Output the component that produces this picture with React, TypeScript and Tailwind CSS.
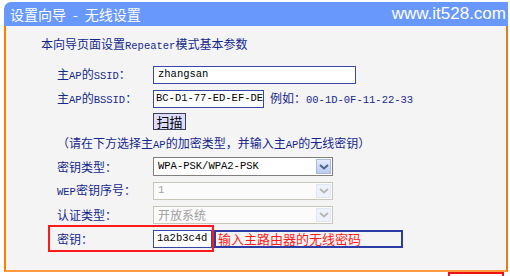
import type { ReactNode } from "react";

const cjk = "font-['Noto_Sans_CJK_SC',sans-serif]";
const mono = "font-['Liberation_Mono','Noto_Sans_CJK_SC',monospace] text-[10.5px]";

function M({ children }: { children: ReactNode }) {
  return <span className={mono}>{children}</span>;
}

function Label({ children }: { children: ReactNode }) {
  return (
    <div className="w-[96px] shrink-0 text-[12px] leading-[16px] text-[#14288c]">
      {children}
    </div>
  );
}

function Chevron({ disabled }: { disabled?: boolean }) {
  return (
    <svg width="10" height="6" viewBox="0 0 10 6">
      <path
        d="M1 1l4 3.5L9 1"
        fill="none"
        stroke={disabled ? "#b8b8b8" : "#4d6185"}
        strokeWidth="2"
      />
    </svg>
  );
}

function Select({ value, disabled }: { value: string; disabled?: boolean }) {
  return (
    <div
      className={`flex h-full w-[180px] items-stretch border ${
        disabled ? "border-[#c9c7ba] bg-[#fbfbfb]" : "border-[#7f7f7f] bg-white"
      }`}
    >
      <div
        className={`flex flex-1 items-center pl-[4px] ${
          disabled ? "text-[#a0a0a0]" : "text-black"
        } ${value === "开放系统" ? "text-[12px]" : mono}`}
      >
        {value}
      </div>
      <div
        className={`m-[1px] flex w-[15px] items-center justify-center border ${
          disabled
            ? "border-[#e2e6ee] bg-[#eef2fb]"
            : "border-[#a9b9d8] bg-gradient-to-b from-[#e4ecfc] to-[#b9cbf1]"
        }`}
      >
        <Chevron disabled={disabled} />
      </div>
    </div>
  );
}

export default function App() {
  return (
    <div className={`h-[276px] w-[510px] overflow-hidden bg-white pt-[2px] ${cjk}`}>
      <div className="ml-[4px] w-[504px]">
        <div className="flex h-[24px] items-center justify-between rounded-tl-[7px] bg-[#6898fc] pl-[6px] pr-[2px] text-white">
          <span className="text-[14px] leading-[24px]">
            设置向导<span className="mx-[7px]">-</span>无线设置
          </span>
          <span className="font-['Liberation_Sans',sans-serif] text-[17px] leading-[24px]">
            www.it528.com
          </span>
        </div>
        <div className="flex h-[246px] flex-col border-x-2 border-b-2 border-l-[#ff7d00] border-r-[#e87a1e] border-b-[#ff9a3c] bg-[#f4f4f4] pt-[10px] text-[12px]">
          <div className="h-[16px] pl-[35px] leading-[16px] text-[#14288c]">
            本向导页面设置<M>Repeater</M>模式基本参数
          </div>

          <div className="mt-[14px] flex h-[18px] items-center pl-[51px]">
            <Label>
              主<M>AP</M>的<M>SSID</M>：
            </Label>
            <div className={`flex h-full w-[203px] items-center border-[1.5px] border-[#3648a8] bg-white pl-[4px] ${mono}`}>
              zhangsan
            </div>
          </div>

          <div className="mt-[6px] flex h-[18px] items-center pl-[51px]">
            <Label>
              主<M>AP</M>的<M>BSSID</M>：
            </Label>
            <div className={`flex h-full w-[111px] items-center whitespace-nowrap border-[1.5px] border-[#3648a8] bg-white pl-[2px] ${mono}`}>
              BC-D1-77-ED-EF-DE
            </div>
            <span className="ml-[6px] text-[#14288c]">
              例如：<M>00-1D-0F-11-22-33</M>
            </span>
          </div>

          <div className="mt-[5px] flex h-[17px] pl-[147px]">
            <div className="flex w-[33px] items-center justify-center border border-[#3d3d5c] bg-[#dcdcfc] text-[13px] leading-[15px] text-black">
              扫描
            </div>
          </div>

          <div className="mt-[5px] h-[16px] pl-[51px] leading-[16px] text-[#14288c]">
            （请在下方选择主<M>AP</M>的加密类型，并输入主<M>AP</M>的无线密钥）
          </div>

          <div className="mt-[6px] flex h-[19px] items-center pl-[51px]">
            <Label>密钥类型：</Label>
            <Select value="WPA-PSK/WPA2-PSK" />
          </div>

          <div className="mt-[6px] flex h-[18px] items-center pl-[51px]">
            <Label>
              <M>WEP</M>密钥序号：
            </Label>
            <Select value="1" disabled />
          </div>

          <div className="mt-[6px] flex h-[18px] items-center pl-[51px]">
            <Label>认证类型：</Label>
            <Select value="开放系统" disabled />
          </div>

          <div className="mt-[1px] flex items-center pl-[42px]">
            <div className="flex h-[27px] w-[166px] items-center border-2 border-[#ff1a1a] pl-[7px]">
              <Label>密钥：</Label>
              <div className={`flex h-[18px] w-[59px] items-center border-[1.5px] border-[#3648a8] bg-white pl-[3px] ${mono}`}>
                1a2b3c4d
              </div>
            </div>
            <div className="flex h-[18px] w-[189px] items-center border-2 border-[#2b3ca6] pl-[2px] text-[13px] text-[#ff1a1a]">
              输入主路由器的无线密码
            </div>
          </div>
        </div>
        <div className="flex justify-end pr-[4px]">
          <div className="h-[4px] w-[56px] border-x-2 border-t-2 border-[#ee1111]" />
        </div>
      </div>
    </div>
  );
}
